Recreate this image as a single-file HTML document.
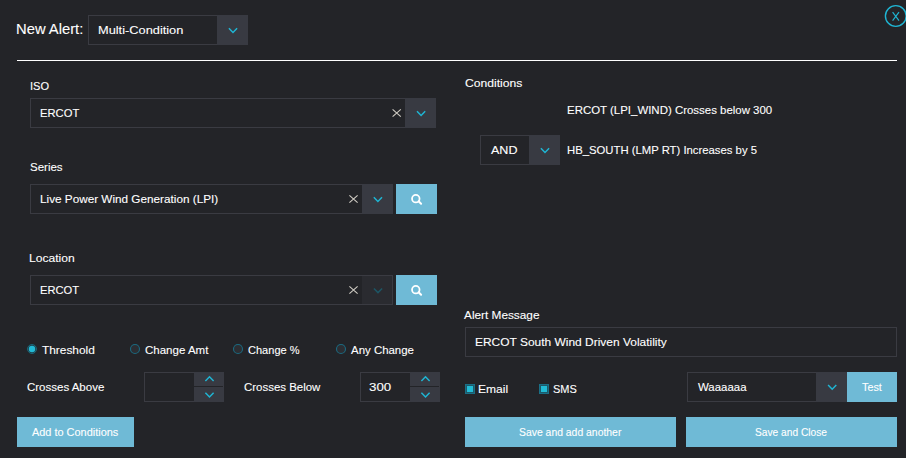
<!DOCTYPE html>
<html><head><meta charset="utf-8"><style>
html,body{margin:0;padding:0;}
body{width:906px;height:458px;background:#232428;position:relative;overflow:hidden;font-family:"Liberation Sans",sans-serif;}
.r{position:absolute;box-sizing:border-box;}
.t{position:absolute;white-space:nowrap;line-height:1;transform-origin:0 0;-webkit-text-stroke:0.1px #fff;}
svg{position:absolute;left:0;top:0;}
</style></head><body>
<div class="r" style="left:17px;top:60px;width:880px;height:1px;background:#ffffff;"></div>
<div class="r" style="left:88px;top:15px;width:160px;height:30px;box-shadow:inset 0 0 0 1px #3a3b42;"></div>
<div class="r" style="left:217px;top:15px;width:31px;height:30px;background:#383a42;"></div>
<div class="r" style="left:30px;top:98px;width:406px;height:30px;box-shadow:inset 0 0 0 1px #3a3b42;"></div>
<div class="r" style="left:405px;top:98px;width:31px;height:30px;background:#383a42;"></div>
<div class="r" style="left:30px;top:184px;width:363px;height:30px;box-shadow:inset 0 0 0 1px #3a3b42;"></div>
<div class="r" style="left:362px;top:184px;width:31px;height:30px;background:#383a42;"></div>
<div class="r" style="left:396px;top:184px;width:41px;height:30px;background:#6fbad6;"></div>
<div class="r" style="left:30px;top:275px;width:363px;height:30px;box-shadow:inset 0 0 0 1px #3a3b42;"></div>
<div class="r" style="left:362px;top:275px;width:31px;height:30px;background:#2a2b30;border:1px solid #3a3b42;border-left:none;"></div>
<div class="r" style="left:396px;top:275px;width:41px;height:30px;background:#6fbad6;"></div>
<div class="r" style="left:144px;top:372px;width:80px;height:30px;box-shadow:inset 0 0 0 1px #3a3b42;"></div>
<div class="r" style="left:194px;top:372px;width:30px;height:14px;background:#383a42;"></div>
<div class="r" style="left:194px;top:387px;width:30px;height:15px;background:#383a42;"></div>
<div class="r" style="left:360px;top:372px;width:80px;height:30px;box-shadow:inset 0 0 0 1px #3a3b42;"></div>
<div class="r" style="left:410px;top:372px;width:30px;height:14px;background:#383a42;"></div>
<div class="r" style="left:410px;top:387px;width:30px;height:15px;background:#383a42;"></div>
<div class="r" style="left:17px;top:417px;width:117px;height:30px;background:#6fbad6;"></div>
<div class="r" style="left:480px;top:135px;width:80px;height:30px;box-shadow:inset 0 0 0 1px #3a3b42;"></div>
<div class="r" style="left:529px;top:135px;width:31px;height:30px;background:#383a42;"></div>
<div class="r" style="left:465px;top:327px;width:432px;height:30px;box-shadow:inset 0 0 0 1px #3a3b42;"></div>
<div class="r" style="left:465px;top:384px;width:10px;height:10px;background:#1d5a6a;box-shadow:inset 0 0 0 1px #1a6f86;"></div>
<div class="r" style="left:467px;top:386px;width:6px;height:6px;background:#22bcd6;"></div>
<div class="r" style="left:539px;top:384px;width:10px;height:10px;background:#1d5a6a;box-shadow:inset 0 0 0 1px #1a6f86;"></div>
<div class="r" style="left:541px;top:386px;width:6px;height:6px;background:#22bcd6;"></div>
<div class="r" style="left:687px;top:372px;width:160px;height:30px;box-shadow:inset 0 0 0 1px #3a3b42;"></div>
<div class="r" style="left:816px;top:372px;width:31px;height:30px;background:#383a42;"></div>
<div class="r" style="left:847px;top:372px;width:50px;height:30px;background:#6fbad6;"></div>
<div class="r" style="left:465px;top:417px;width:211px;height:30px;background:#6fbad6;"></div>
<div class="r" style="left:686px;top:417px;width:211px;height:30px;background:#6fbad6;"></div>
<svg width="906" height="458" viewBox="0 0 906 458">
<path d="M228.9,28.2 L233,32.4 L237.1,28.2" fill="none" stroke="#1fb5d3" stroke-width="1.5"/>
<path d="M392.59999999999997,109.3 L400.8,116.7 M400.8,109.3 L392.59999999999997,116.7" stroke="#d0ccc4" stroke-width="1.1" fill="none"/>
<path d="M417.0,111.2 L421.1,115.39999999999999 L425.20000000000005,111.2" fill="none" stroke="#1fb5d3" stroke-width="1.5"/>
<path d="M349.4,195.3 L357.6,202.7 M357.6,195.3 L349.4,202.7" stroke="#d0ccc4" stroke-width="1.1" fill="none"/>
<path d="M373.79999999999995,197.20000000000002 L377.9,201.4 L382.0,197.20000000000002" fill="none" stroke="#1fb5d3" stroke-width="1.5"/>
<circle cx="415.8" cy="198.7" r="3.75" fill="none" stroke="#fff" stroke-width="1.8"/><path d="M418.6,201.3 L421.1,203.8" stroke="#fff" stroke-width="2" stroke-linecap="round"/>
<path d="M349.4,286.3 L357.6,293.7 M357.6,286.3 L349.4,293.7" stroke="#d0ccc4" stroke-width="1.1" fill="none"/>
<path d="M373.9,288.4 L378,292.6 L382.1,288.4" fill="none" stroke="#1d5564" stroke-width="1.5"/>
<circle cx="415.8" cy="289.7" r="3.75" fill="none" stroke="#fff" stroke-width="1.8"/><path d="M418.6,292.3 L421.1,294.8" stroke="#fff" stroke-width="2" stroke-linecap="round"/>
<circle cx="32" cy="349" r="4.5" fill="#1f3f49" stroke="#1b6577" stroke-width="1"/>
<circle cx="32" cy="349" r="3.2" fill="#22bad5"/>
<circle cx="135" cy="349" r="4.5" fill="#2c2e33" stroke="#1b6a80" stroke-width="1.1"/>
<circle cx="238" cy="349" r="4.5" fill="#2c2e33" stroke="#1b6a80" stroke-width="1.1"/>
<circle cx="341" cy="349" r="4.5" fill="#2c2e33" stroke="#1b6a80" stroke-width="1.1"/>
<path d="M205.4,381.0 L209.5,376.79999999999995 L213.6,381.0" fill="none" stroke="#1fb5d3" stroke-width="1.5"/>
<path d="M205.4,392.79999999999995 L209.5,397.0 L213.6,392.79999999999995" fill="none" stroke="#1fb5d3" stroke-width="1.5"/>
<path d="M421.4,381.0 L425.5,376.79999999999995 L429.6,381.0" fill="none" stroke="#1fb5d3" stroke-width="1.5"/>
<path d="M421.4,392.79999999999995 L425.5,397.0 L429.6,392.79999999999995" fill="none" stroke="#1fb5d3" stroke-width="1.5"/>
<path d="M540.9,148.20000000000002 L545,152.4 L549.1,148.20000000000002" fill="none" stroke="#1fb5d3" stroke-width="1.5"/>
<path d="M828.1,385.09999999999997 L832.2,389.3 L836.3000000000001,385.09999999999997" fill="none" stroke="#1fb5d3" stroke-width="1.5"/>
<circle cx="895.8" cy="16" r="10.4" fill="none" stroke="#1fb5d3" stroke-width="1.4"/>
<path d="M892.6,12.2 L899,20.6 M899,12.2 L892.6,20.6" fill="none" stroke="#1fb5d3" stroke-width="1.15"/>
</svg>
<div class="t" id="t0" style="left:16.00px;top:22.15px;font-size:14px;color:#ffffff;transform:scaleX(1.0551);">New Alert:</div>
<div class="t" id="t1" style="left:98.00px;top:24.87px;font-size:11.5px;color:#ffffff;transform:scaleX(1.1129);">Multi-Condition</div>
<div class="t" id="t2" style="left:30.00px;top:80.87px;font-size:11.5px;color:#ffffff;transform:scaleX(0.9626);">ISO</div>
<div class="t" id="t3" style="left:40.00px;top:107.87px;font-size:11.5px;color:#ffffff;transform:scaleX(0.9747);">ERCOT</div>
<div class="t" id="t4" style="left:30.00px;top:161.87px;font-size:11.5px;color:#ffffff;transform:scaleX(0.9992);">Series</div>
<div class="t" id="t5" style="left:40.00px;top:193.87px;font-size:11.5px;color:#ffffff;transform:scaleX(1.0211);">Live Power Wind Generation (LPI)</div>
<div class="t" id="t6" style="left:29.00px;top:252.87px;font-size:11.5px;color:#ffffff;transform:scaleX(1.0511);">Location</div>
<div class="t" id="t7" style="left:40.00px;top:284.87px;font-size:11.5px;color:#ffffff;transform:scaleX(0.9700);">ERCOT</div>
<div class="t" id="t8" style="left:42.00px;top:344.87px;font-size:11.5px;color:#ffffff;transform:scaleX(1.0333);">Threshold</div>
<div class="t" id="t9" style="left:145.00px;top:344.87px;font-size:11.5px;color:#ffffff;transform:scaleX(1.0010);">Change Amt</div>
<div class="t" id="t10" style="left:248.00px;top:344.87px;font-size:11.5px;color:#ffffff;transform:scaleX(0.9594);">Change %</div>
<div class="t" id="t11" style="left:351.00px;top:344.87px;font-size:11.5px;color:#ffffff;transform:scaleX(0.9946);">Any Change</div>
<div class="t" id="t12" style="left:27.00px;top:381.87px;font-size:11.5px;color:#ffffff;transform:scaleX(0.9991);">Crosses Above</div>
<div class="t" id="t13" style="left:244.00px;top:381.87px;font-size:11.5px;color:#ffffff;transform:scaleX(0.9952);">Crosses Below</div>
<div class="t" id="t14" style="left:369.00px;top:381.87px;font-size:11.5px;color:#ffffff;transform:scaleX(1.1562);">300</div>
<div class="t" id="t15" style="left:32.00px;top:426.69px;font-size:11px;color:#ffffff;transform:scaleX(0.9932);">Add to Conditions</div>
<div class="t" id="t16" style="left:465.00px;top:77.87px;font-size:11.5px;color:#ffffff;transform:scaleX(1.0559);">Conditions</div>
<div class="t" id="t17" style="left:567.00px;top:104.87px;font-size:11.5px;color:#ffffff;transform:scaleX(0.9952);">ERCOT (LPI_WIND) Crosses below 300</div>
<div class="t" id="t18" style="left:491.00px;top:144.87px;font-size:11.5px;color:#ffffff;transform:scaleX(1.0913);">AND</div>
<div class="t" id="t19" style="left:567.00px;top:144.87px;font-size:11.5px;color:#ffffff;transform:scaleX(0.9832);">HB_SOUTH (LMP RT) Increases by 5</div>
<div class="t" id="t20" style="left:464.00px;top:309.87px;font-size:11.5px;color:#ffffff;transform:scaleX(1.0269);">Alert Message</div>
<div class="t" id="t21" style="left:475.00px;top:336.87px;font-size:11.5px;color:#ffffff;transform:scaleX(1.0397);">ERCOT South Wind Driven Volatility</div>
<div class="t" id="t22" style="left:478.00px;top:383.87px;font-size:11.5px;color:#ffffff;transform:scaleX(1.0479);">Email</div>
<div class="t" id="t23" style="left:553.00px;top:383.87px;font-size:11.5px;color:#ffffff;transform:scaleX(0.9563);">SMS</div>
<div class="t" id="t24" style="left:698.00px;top:381.87px;font-size:11.5px;color:#ffffff;transform:scaleX(0.9939);">Waaaaaa</div>
<div class="t" id="t25" style="left:862.00px;top:381.87px;font-size:11.5px;color:#ffffff;transform:scaleX(0.9370);">Test</div>
<div class="t" id="t26" style="left:519.00px;top:426.69px;font-size:11px;color:#ffffff;transform:scaleX(0.9454);">Save and add another</div>
<div class="t" id="t27" style="left:755.00px;top:426.69px;font-size:11px;color:#ffffff;transform:scaleX(0.9261);">Save and Close</div>
</body></html>
